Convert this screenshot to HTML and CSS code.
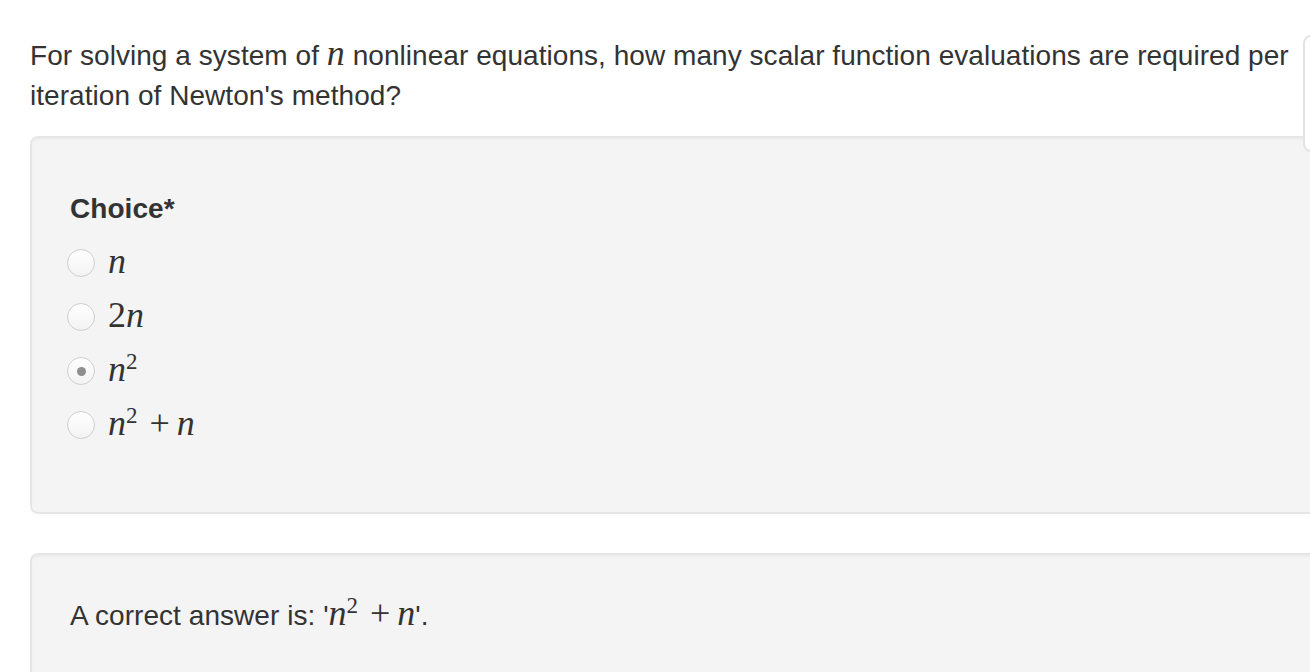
FILE: index.html
```html
<!DOCTYPE html>
<html>
<head>
<meta charset="utf-8">
<link rel="stylesheet" href="styles.css">
</head>
<body>
<div class="page">
  <p class="question">For solving a system of <span class="m">n</span> nonlinear equations, how many scalar function evaluations are required per iteration of Newton's method?</p>
  <div class="side-panel"></div>
  <div class="well choices">
    <div class="label">Choice*</div>
    <div class="opt"><span class="radio"></span><span class="txt"><span class="m">n</span></span></div>
    <div class="opt"><span class="radio"></span><span class="txt"><span class="mu">2</span><span class="m">n</span></span></div>
    <div class="opt"><span class="radio checked"></span><span class="txt"><span class="m">n</span><span class="sup">2</span></span></div>
    <div class="opt"><span class="radio"></span><span class="txt"><span class="m">n</span><span class="sup">2</span><span class="mu op">+</span><span class="m">n</span></span></div>
  </div>
  <div class="well answer">
    <div class="ans">A correct answer is: '<span class="m">n</span><span class="sup">2</span><span class="mu op">+</span><span class="m">n</span>'.</div>
  </div>
</div>
</body>
</html>
```
FILE: styles.css
```css
html, body {
  margin: 0;
  padding: 0;
  background: #fff;
  overflow: hidden;
}
body {
  font-family: "Liberation Sans", Arial, sans-serif;
  font-size: 28px;
  line-height: 40px;
  letter-spacing: 0.05px;
  color: #333;
}
.page {
  position: relative;
  width: 1380px;
  padding: 35px 0 0 30px;
}
.question {
  margin: 0 0 20px 0;
  width: 1272px;
}
.side-panel {
  position: absolute;
  left: 1303px;
  top: 35px;
  width: 200px;
  height: 113px;
  background: #fff;
  border: 2px solid #e3e3e3;
  border-radius: 8px;
  z-index: 2;
}
.well {
  background: #f4f4f4;
  border: 2px solid #e6e6e6;
  border-radius: 8px;
  box-shadow: inset 0 2px 2px rgba(0,0,0,0.03);
}
.choices {
  padding: 51px 38px 60px 38px;
  margin-bottom: 39px;
}
.label {
  font-weight: bold;
  margin-bottom: 7px;
}
.opt {
  display: flex;
  align-items: center;
  height: 54px;
}
.txt {
  line-height: 40px;
}
.radio {
  width: 26px;
  height: 26px;
  border: 1px solid #cfcfcf;
  border-radius: 50%;
  background: linear-gradient(#ffffff, #f3f3f3);
  box-sizing: content-box;
  margin-left: -3px;
  margin-right: 13px;
  display: flex;
  align-items: center;
  justify-content: center;
  flex: none;
}
.radio.checked::after {
  content: "";
  width: 9px;
  height: 9px;
  border-radius: 50%;
  background: #8f8f8f;
}
.m {
  font-family: "Liberation Serif", "Times New Roman", serif;
  font-style: italic;
  font-size: 36px;
  line-height: 1;
  letter-spacing: 0;
}
.mu {
  font-family: "Liberation Serif", "Times New Roman", serif;
  font-size: 36px;
  line-height: 1;
  letter-spacing: 0;
}
.op {
  margin: 0 7px 0 12px;
}
.sup {
  font-family: "Liberation Serif", "Times New Roman", serif;
  font-size: 23px;
  line-height: 1;
  position: relative;
  top: -12px;
  vertical-align: baseline;
  margin-left: 0;
  letter-spacing: 0;
}
.answer {
  padding: 40px 38px 60px 38px;
  min-height: 200px;
}
```
